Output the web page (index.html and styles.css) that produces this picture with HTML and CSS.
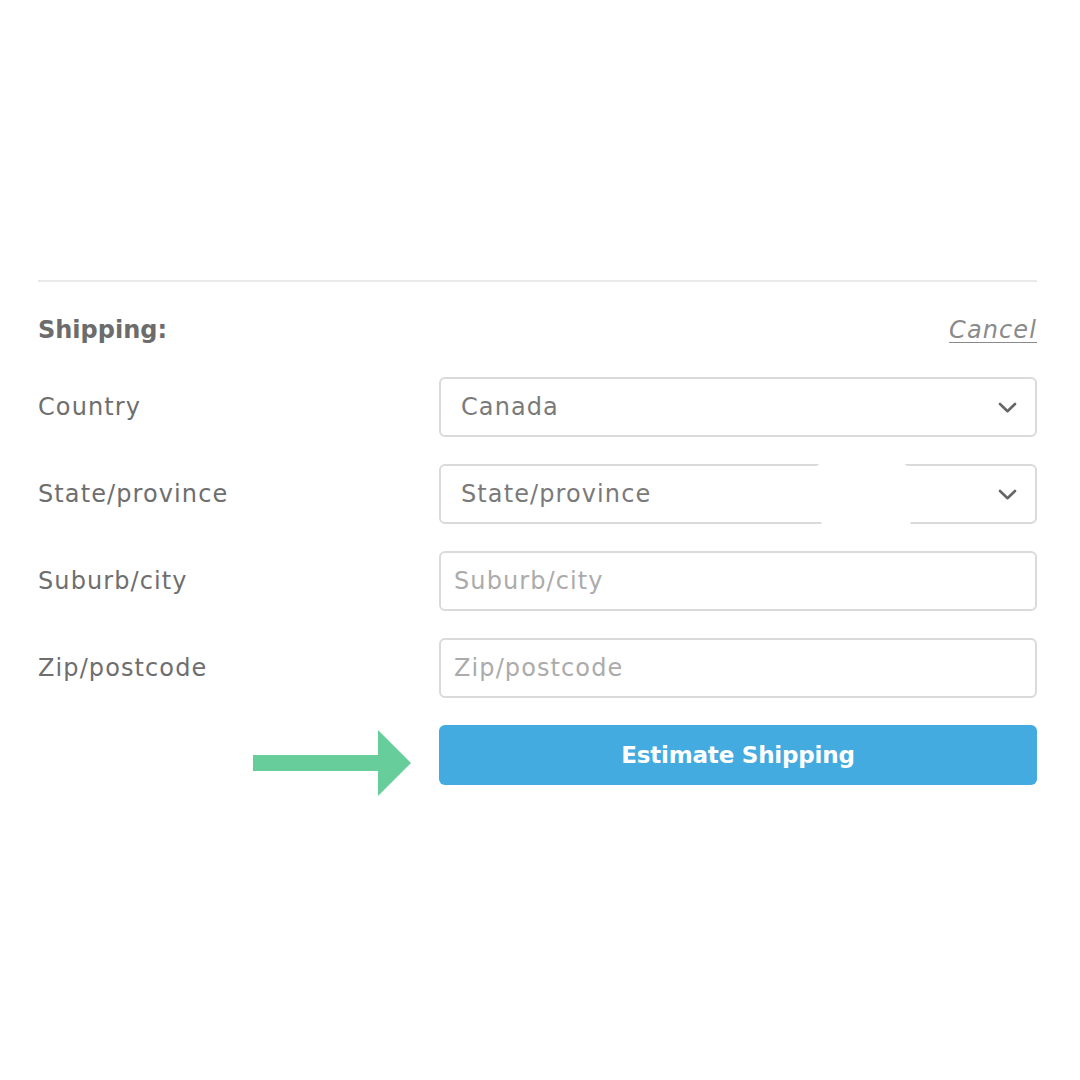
FILE: index.html
```html
<!DOCTYPE html>
<html lang="en">
<head>
<meta charset="utf-8">
<title>Shipping</title>
<link rel="stylesheet" href="styles.css">
</head>
<body>
<div class="panel">
  <div class="divider"></div>
  <div class="header">
    <span class="title">Shipping:</span>
    <a class="cancel" href="#">Cancel</a>
  </div>
  <div class="form">
    <label class="label">Country</label>
    <div class="field select">
      <span class="value">Canada</span>
      <svg class="chev" viewBox="0 0 19 11" width="19" height="11"><path d="M2 2 L9.5 9.2 L17 2" fill="none" stroke="#666" stroke-width="2.6" stroke-linecap="round" stroke-linejoin="round"/></svg>
    </div>

    <label class="label">State/province</label>
    <div class="field select">
      <span class="value">State/province</span>
      <svg class="chev" viewBox="0 0 19 11" width="19" height="11"><path d="M2 2 L9.5 9.2 L17 2" fill="none" stroke="#666" stroke-width="2.6" stroke-linecap="round" stroke-linejoin="round"/></svg>
      <span class="smudge smudge-top"></span>
      <span class="smudge smudge-bottom"></span>
    </div>

    <label class="label">Suburb/city</label>
    <div class="field input"><span class="placeholder">Suburb/city</span></div>

    <label class="label">Zip/postcode</label>
    <div class="field input"><span class="placeholder">Zip/postcode</span></div>

    <div class="arrow-cell">
      <svg class="arrow" viewBox="0 0 158 66" width="158" height="66"><path d="M0 25 H125 V0 L158 33 L125 66 V41 H0 Z" fill="#67cd9b"/></svg>
    </div>
    <button class="btn">Estimate Shipping</button>
  </div>
</div>
</body>
</html>
```
FILE: styles.css
```css
* { box-sizing: border-box; }
html, body { margin: 0; padding: 0; background: #fff; }
body { font-family: "DejaVu Sans", "Liberation Sans", sans-serif; }

.panel {
  width: 999px;
  margin: 0 0 0 38px;
  padding-top: 280px;
}

.divider {
  height: 2px;
  background: #e9e9e9;
}

.header {
  display: flex;
  justify-content: space-between;
  align-items: center;
  height: 48px;
  margin-top: 24px;
}

.title {
  font-size: 24px;
  font-weight: 700;
  color: #6c6c6c;
}

.cancel {
  font-size: 24px;
  font-style: italic;
  font-weight: 200;
  letter-spacing: 1.1px;
  color: #8a8a8a;
  text-decoration: underline;
  text-decoration-thickness: 1px;
  text-underline-offset: 4px;
}

.form {
  display: grid;
  grid-template-columns: 401px 598px;
  grid-template-rows: repeat(4, 60px) 72px;
  row-gap: 27px;
  margin-top: 23px;
}

.label {
  display: flex;
  align-items: center;
  font-size: 24px;
  letter-spacing: 1.1px;
  color: #6e6e6e;
}

.field {
  position: relative;
  display: flex;
  align-items: center;
  border: 2px solid #dadada;
  border-radius: 6px;
  font-size: 24px;
  letter-spacing: 1.1px;
}

.select { padding: 0 18px 0 20px; justify-content: space-between; }
.value { color: #7a7a7a; }
.input { padding: 0 13px; }
.placeholder { color: #ababab; }

.chev { display: block; }

.smudge {
  position: absolute;
  background: #fff;
  border-radius: 50%;
}
.smudge-top { left: 376px; top: -6px; width: 90px; height: 12px; }
.smudge-bottom { left: 380px; bottom: -7px; width: 90px; height: 13px; }

.arrow-cell {
  display: flex;
  justify-content: flex-end;
  align-items: flex-start;
  padding: 5px 28px 0 0;
}
.arrow {
  display: block;
  flex-shrink: 0;
}

.btn {
  align-self: start;
  height: 60px;
  border: none;
  border-radius: 6px;
  background: #44abe0;
  color: #fff;
  font-family: "DejaVu Sans", sans-serif;
  font-weight: 700;
  font-size: 23px;
  letter-spacing: -0.2px;
}
```
